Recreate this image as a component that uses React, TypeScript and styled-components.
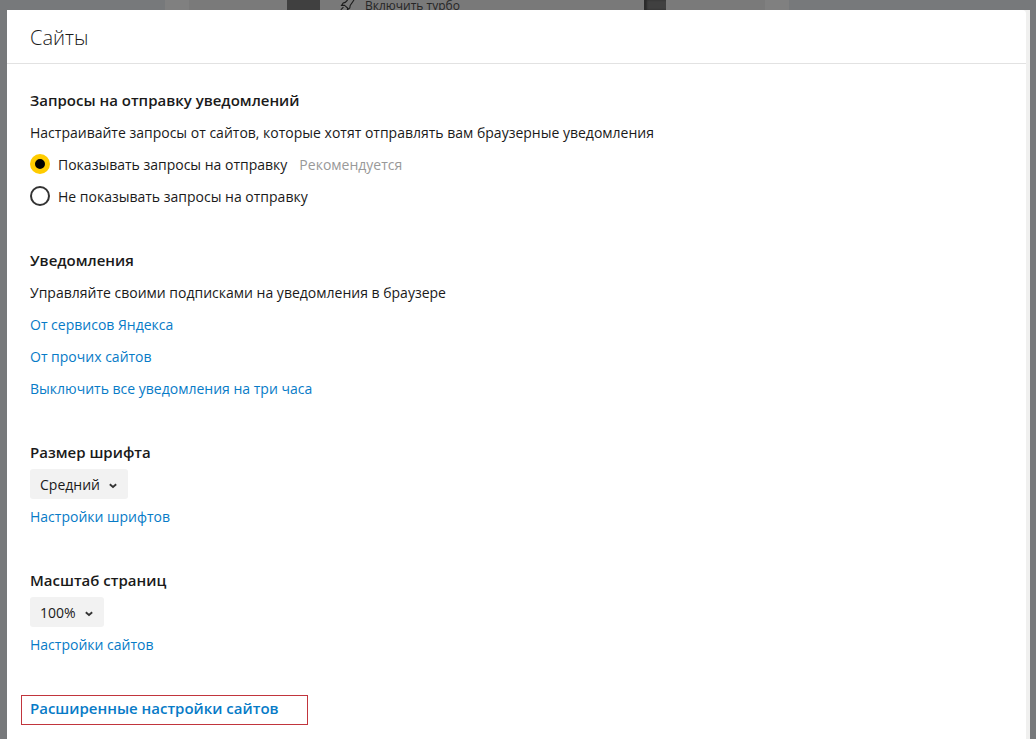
import React from "react";
import styled, { createGlobalStyle } from "styled-components";

const GlobalStyle = createGlobalStyle`
  *, *::before, *::after { box-sizing: border-box; }
  body {
    margin: 0;
    background: #77797b;
    color: #1a1a1a;
    font-family: "Open Sans", "Noto Sans", sans-serif;
    font-size: 14px;
    line-height: 32px;
  }
`;

const Page = styled.div`
  display: flex;
  flex-direction: column;
  min-height: 100vh;
`;

const Backdrop = styled.div`
  display: flex;
  height: 10px;
  overflow: hidden;
`;

const Stripe = styled.div<{ $width?: number; $tone: string }>`
  flex: ${(p) => (p.$width ? `0 0 ${p.$width}px` : "1")};
  background: ${(p) => p.$tone};
`;

const MenuEdge = styled(Stripe)`
  box-shadow: inset 3px 0 2px #2a2a2a;
`;

const MenuItem = styled.div`
  display: flex;
  flex: 0 0 324px;
  gap: 10px;
  padding-left: 20px;
  background: #797979;
  color: #262626;
  font-size: 12px;
  line-height: 12px;
`;

const Dialog = styled.main`
  display: flex;
  flex: 1;
  margin: 0 6px 0 7px;
  background: #f0f0ef;
`;

const Sheet = styled.div`
  flex: 1;
  margin-right: 4px;
  border-top-right-radius: 4px;
  background: #fff;
`;

const Header = styled.header`
  padding: 12px 23px 9px;
  border-bottom: 1px solid #e2e2e2;
`;

const Title = styled.h1`
  margin: 0;
  font-size: 20px;
  font-weight: 300;
  line-height: 32px;
`;

const Body = styled.div`
  display: flex;
  flex-direction: column;
  gap: 32px;
  padding: 21px 23px 14px;
`;

const Section = styled.section`
  display: flex;
  flex-direction: column;
  align-items: flex-start;
`;

const Heading = styled.h2`
  margin: 0;
  padding-bottom: 2px;
  font-size: 15px;
  font-weight: 600;
  line-height: 30px;
`;

const Text = styled.p`
  margin: 0;
`;

const Option = styled.label`
  display: flex;
  align-items: center;
  gap: 8px;
`;

const Radio = styled.input`
  appearance: none;
  width: 20px;
  height: 20px;
  margin: 0 0 2px;
  border: 2px solid #333;
  border-radius: 50%;
  background: #fff;

  &:checked {
    border: 5px solid #ffcc00;
    background: #000;
  }
`;

const Hint = styled.span`
  margin-left: 4px;
  color: #999;
`;

const Link = styled.a`
  color: #077bc7;
  text-decoration: none;
`;

const Picker = styled.span`
  display: flex;
  position: relative;
  margin-bottom: 2px;
`;

const Select = styled.select<{ $width: number }>`
  appearance: none;
  width: ${(p) => p.$width}px;
  height: 30px;
  padding: 2px 10px 0;
  border: 0;
  border-radius: 3px;
  background: #f2f2f2;
  color: inherit;
  font: inherit;
  line-height: 28px;
`;

const Chevron = styled.svg`
  position: absolute;
  top: 14px;
  right: 11px;
  pointer-events: none;
`;

const Framed = styled.div`
  display: flex;
  width: 287px;
  height: 30px;
  margin: 2px 0 0 -9px;
  padding-left: 8px;
  border: 1px solid #c1353d;
  line-height: 24px;
`;

const StrongLink = styled(Link)`
  font-size: 15px;
  font-weight: 600;
`;

function Dropdown(props: { id: string; value: string; width: number }) {
  return (
    <Picker>
      <Select id={props.id} $width={props.width} defaultValue={props.value}>
        <option>{props.value}</option>
      </Select>
      <Chevron width="8" height="6" viewBox="0 0 8 6" fill="none" stroke="#333" strokeWidth="1.8">
        <path d="M0.8 1.2 4 4 7.2 1.2" />
      </Chevron>
    </Picker>
  );
}

export default function App() {
  return (
    <>
      <GlobalStyle />
      <Page>
        <Backdrop>
          <Stripe $width={165} $tone="#77797b" />
          <Stripe $width={24} $tone="#808080" />
          <Stripe $width={98} $tone="#7a7a7a" />
          <Stripe $width={33} $tone="#404040" />
          <MenuItem>
            <svg width="15" height="12" viewBox="0 0 15 12" fill="none" stroke="#1c1c1c" strokeWidth="1.1">
              <path d="M7.6 0 5.2 2.4 3.2 3 1.6 5.4 4.4 5.2 7.6 8 7.4 9.8 9.8 8 10.2 5.4 14 0 M3.4 7.2 0.8 9.8" />
            </svg>
            <span>Включить турбо</span>
          </MenuItem>
          <MenuEdge $width={22} $tone="#404040" />
          <Stripe $width={99} $tone="#7a7a7a" />
          <Stripe $width={24} $tone="#808080" />
          <Stripe $tone="#77797b" />
        </Backdrop>
        <Dialog>
          <Sheet>
            <Header>
              <Title>Сайты</Title>
            </Header>
            <Body>
              <Section>
                <Heading>Запросы на отправку уведомлений</Heading>
                <Text>Настраивайте запросы от сайтов, которые хотят отправлять вам браузерные уведомления</Text>
                <Option>
                  <Radio type="radio" name="requests" defaultChecked />
                  <span>Показывать запросы на отправку</span>
                  <Hint>Рекомендуется</Hint>
                </Option>
                <Option>
                  <Radio type="radio" name="requests" />
                  <span>Не показывать запросы на отправку</span>
                </Option>
              </Section>
              <Section>
                <Heading>Уведомления</Heading>
                <Text>Управляйте своими подписками на уведомления в браузере</Text>
                <Link href="#services">От сервисов Яндекса</Link>
                <Link href="#others">От прочих сайтов</Link>
                <Link href="#mute">Выключить все уведомления на три часа</Link>
              </Section>
              <Section>
                <Heading as="label" htmlFor="font-size">Размер шрифта</Heading>
                <Dropdown id="font-size" value="Средний" width={98} />
                <Link href="#fonts">Настройки шрифтов</Link>
              </Section>
              <Section>
                <Heading as="label" htmlFor="zoom">Масштаб страниц</Heading>
                <Dropdown id="zoom" value="100%" width={74} />
                <Link href="#sites">Настройки сайтов</Link>
              </Section>
              <Section>
                <Framed>
                  <StrongLink href="#advanced">Расширенные настройки сайтов</StrongLink>
                </Framed>
              </Section>
            </Body>
          </Sheet>
        </Dialog>
      </Page>
    </>
  );
}
